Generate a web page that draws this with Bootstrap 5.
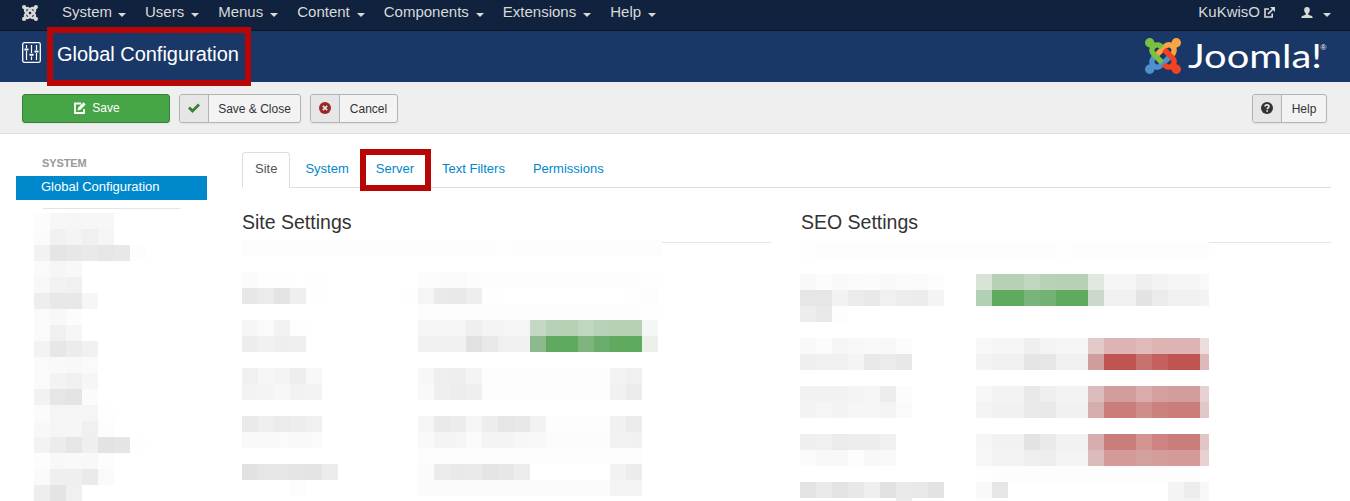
<!DOCTYPE html>
<html lang="en">
<head>
<meta charset="utf-8">
<meta name="viewport" content="width=device-width, initial-scale=1">
<title>Global Configuration</title>
<link rel="stylesheet" href="https://cdn.jsdelivr.net/npm/bootstrap@5.3.0/dist/css/bootstrap.min.css">
<style>
body{font:13px/18px "Liberation Sans",Arial,sans-serif;color:#333;height:501px;overflow:hidden;background:#fff}
.topbar{height:31px;background:#10223e;border-bottom:1px solid #0b1626;padding:0 19px 0 22px}
.topbar .nav-link{color:#d9d9d9;font-size:15px;line-height:24px;padding:0;white-space:nowrap}
.topbar .menu-item{margin-right:19px}
.arrow{display:inline-block;border:4px solid transparent;border-top-color:#d9d9d9;border-bottom:0;margin-left:7px;vertical-align:0}
.titlebar{height:51px;background:#1a3867;color:#fff;padding:0 23px 0 22px}
.page-title{font-size:20px;line-height:47px;margin:0 0 0 16px;font-weight:400;letter-spacing:-.02px;position:relative}
.framed{position:relative}
.framed::after{content:"";position:absolute;border:6px solid #b80606;z-index:5}
.page-title::after{left:-10px;top:-4px;width:204px;height:59px}
.toolbar{height:52px;background:#efefef;border-bottom:1px solid #ddd;padding:12px 23px 0 22px}
.toolbar .btn{height:29px;font-size:12px;line-height:29px;border-radius:3px;padding:0;color:#333;background:#f3f3f3;border:1px solid #b3b3b3;display:flex;overflow:hidden;box-shadow:0 1px 2px rgba(0,0,0,.05)}
.toolbar .btn-save{width:148px;background:#46a546;border-color:#378137;color:#fff;justify-content:center;align-items:center;gap:6px}
.btn-save svg{margin:-2px 0 0 2px}
.btn-icon{width:29px;background:#e6e6e6;border-right:1px solid #b3b3b3;display:flex;align-items:center;justify-content:center;padding-bottom:2px}
.btn-label{flex:1;text-align:center}
.sidebar{width:191px;margin-left:16px;padding-top:21px;flex:none}
.side-head{font-size:11px;font-weight:700;color:#999;margin-left:26px;height:21px;line-height:17px;letter-spacing:-.1px}
.side-active{background:#08c;color:#fff;height:24px;line-height:21px;padding-left:25px;text-decoration:none;display:block}
.side-rule{width:137px;height:1px;background:#e5e5e5;margin:8px 0 4px 27px}
.content{width:1089px;margin-left:35px;padding-top:18px;flex:none}
.nav-tabs{height:36px;border-color:#ddd}
.nav-tabs .nav-link{font-size:13px;line-height:18px;color:#08c;padding:7px 12px;height:36px;border-radius:4px 4px 0 0;margin-right:2px}
.nav-tabs .nav-link.active{color:#555;border-color:#ddd #ddd #fff}
.nav-tabs .tight{margin-right:1px}
.tab-server::after{left:-15.5px;top:-12px;width:71px;height:42px}
.group{width:530px}
.group h2{font-size:19.5px;line-height:36px;height:55px;padding-top:16px;margin:0;border-bottom:1px solid #e5e5e5;font-weight:400;color:#333}
.mosaic{display:grid;grid-auto-rows:16px;background:#fff;position:relative;overflow:hidden}
.mosaic-side{grid-template-columns:repeat(7,16px);margin-left:18px}
.mosaic-site{grid-template-columns:repeat(27,16px);width:420px;margin-top:-3px}
.mosaic-seo{grid-template-columns:repeat(26,16px);width:409px;margin:-1px 0 0 -1px}
</style>
</head>
<body>
<svg width="0" height="0" class="position-absolute">
  <defs>
    <g id="arm"><circle cx="4.700" cy="4.700" r="4.700" fill="currentColor"/><path d="M3 8L8 3L11 6L6 11z" fill="currentColor"/><path d="M17.300 9.500C15 7 11.500 5.800 8.800 8.200C6 10.800 6.300 13.800 8.800 16.300L17 24.500" fill="none" stroke="currentColor" stroke-width="5.400"/></g>
  </defs>
</svg>

<nav class="topbar d-flex align-items-start">
  <svg width="16" height="16" viewBox="0 0 36 36" style="color:#d9d9d9;margin:5px 24px 0 0">
    <use href="#arm" transform="rotate(90 18 18)"/><use href="#arm" transform="rotate(270 18 18)"/><use href="#arm"/><use href="#arm" transform="rotate(180 18 18)"/>
  </svg>
  <a class="nav-link menu-item">System<i class="arrow" style="margin-left:6px"></i></a>
  <a class="nav-link menu-item">Users<i class="arrow"></i></a>
  <a class="nav-link menu-item">Menus<i class="arrow"></i></a>
  <a class="nav-link menu-item">Content<i class="arrow"></i></a>
  <a class="nav-link menu-item">Components<i class="arrow"></i></a>
  <a class="nav-link menu-item">Extensions<i class="arrow"></i></a>
  <a class="nav-link menu-item">Help<i class="arrow"></i></a>
  <a class="nav-link ms-auto d-flex align-items-center">KuKwisO
    <svg width="11" height="11" viewBox="0 0 11 11" fill="none" stroke="#d9d9d9" stroke-width="1.6" style="margin-left:4px"><path d="M5 2H1v8h7.2V6.500M4 7L9.500 1.500"/><path d="M6 0h5v5z" fill="#d9d9d9" stroke="none"/></svg>
  </a>
  <a class="nav-link d-flex" style="margin-left:26px">
    <svg width="12" height="12" viewBox="0 0 12 12" fill="#d9d9d9" style="margin-top:7px"><path d="M6 0C4 0 3.200 1.300 3.200 3c0 1.500.7 2.700 1.500 3.300v1.400L1.200 9Q.3 9.500.3 11h11.400q0-1.500-.9-2L7.300 7.700V6.300C8.100 5.700 8.800 4.500 8.800 3 8.800 1.300 8 0 6 0z"/></svg>
    <i class="arrow" style="margin:13px 0 0 10px"></i>
  </a>
</nav>

<header class="titlebar d-flex align-items-start">
  <svg width="19" height="21" viewBox="0 0 19 21" fill="none" stroke="#fff" style="margin-top:11px"><rect x=".7" y=".7" width="17.600" height="19.600" rx="1.500" stroke-width="1.300"/><path d="M4.500 3v3M4.500 9v9M9.500 3v8M9.500 14.500V18M14.500 3v5M14.500 11v7" stroke-width="1.200"/><path d="M2.500 7.500h4M7.500 12.700h4M12.500 9.500h4" stroke-width="2"/></svg>
  <h1 class="page-title framed">Global Configuration</h1>
  <svg class="ms-auto" width="182" height="44" viewBox="0 0 182 44" style="margin-top:4px">
    <g transform="translate(0 3)">
      <use href="#arm" transform="rotate(90 18 18)" color="#f9a541"/>
      <use href="#arm" transform="rotate(270 18 18)" color="#5091cd"/>
      <use href="#arm" color="#7ac043"/>
      <use href="#arm" transform="rotate(180 18 18)" color="#f44321"/>
    </g>
    <text x="43" y="32.500" fill="#fff" font-family="Lato,sans-serif" font-size="32" textLength="134" lengthAdjust="spacingAndGlyphs">Joomla!</text>
    <text x="175.500" y="15" fill="#fff" font-family="Liberation Sans,sans-serif" font-size="8">®</text>
  </svg>
</header>

<div class="toolbar d-flex">
  <button class="btn btn-save"><svg width="12" height="12" viewBox="0 0 12 12" fill="none" stroke="#fff" stroke-width="1.800"><path d="M7 1.500H1v9.500h9V7"/><path d="M3.500 8.500L4.300 5.500 9.500.3l2.200 2.200L6.500 7.700z" fill="#fff" stroke="none"/></svg>Save</button>
  <button class="btn" style="width:122px;margin-left:9px"><span class="btn-icon"><svg width="12" height="10" viewBox="0 0 12 10" fill="none" stroke="#378137" stroke-width="2.800"><path d="M1 4.500l3.500 3.500L11 1.500"/></svg></span><span class="btn-label">Save &amp; Close</span></button>
  <button class="btn" style="width:88px;margin-left:9px"><span class="btn-icon"><svg width="12" height="12" viewBox="0 0 12 12"><circle cx="6" cy="6" r="6" fill="#942a25"/><path d="M3.800 3.800l4.400 4.400M8.200 3.800L3.800 8.200" stroke="#e6e6e6" stroke-width="1.700"/></svg></span><span class="btn-label">Cancel</span></button>
  <button class="btn ms-auto" style="width:75px"><span class="btn-icon"><svg width="12" height="12" viewBox="0 0 12 12"><circle cx="6" cy="6" r="6" fill="#333"/><path d="M4 4.600C4 2.300 8 2.300 8 4.500 8 5.800 6.200 5.700 6.200 7.200" fill="none" stroke="#e6e6e6" stroke-width="1.600"/><path d="M5.300 8.200h1.700v1.600H5.300z" fill="#e6e6e6"/></svg></span><span class="btn-label">Help</span></button>
</div>

<main class="d-flex align-items-start">
  <aside class="sidebar">
    <div class="side-head">SYSTEM</div>
    <a class="side-active">Global Configuration</a>
    <div class="side-rule"></div>
    <div class="mosaic mosaic-side" data-mosaic="side"></div>
  </aside>
  <section class="content">
    <ul class="nav nav-tabs">
      <li class="nav-item"><a class="nav-link active">Site</a></li>
      <li class="nav-item"><a class="nav-link tight">System</a></li>
      <li class="nav-item"><a class="nav-link"><span class="framed tab-server">Server</span></a></li>
      <li class="nav-item"><a class="nav-link">Text Filters</a></li>
      <li class="nav-item"><a class="nav-link">Permissions</a></li>
    </ul>
    <div class="d-flex justify-content-between">
      <div class="group" style="width:529px"><h2>Site Settings</h2><div class="mosaic mosaic-site" data-mosaic="site"></div></div>
      <div class="group"><h2>SEO Settings</h2><div class="mosaic mosaic-seo" data-mosaic="seo"></div></div>
    </div>
  </section>
</main>

<script src="https://cdn.jsdelivr.net/npm/bootstrap@5.3.0/dist/js/bootstrap.bundle.min.js"></script>
<script>
// Redacted areas as 16px tiles: two digits are a grey, six a colour, "." is empty, "*n" repeats.
const tiles = {
side: [7, `fc f7 f6 f7 f7
fb f1 f4 f0 f5
f2 e5 e7 e9 e6 e8 fd
fa f6 f8
f8 f2 f0
ee e8 e8 f6
fa f8 fc
fa f0 f6
f3 e7 ec f1
fa f9 f8 fa
fa f3 f0 f6
f2 e6 e4 fb
fb f5 f5 f5 fe
f8 f5 f6 f0 fd
f3 ec e6 ef e3 e5 fe
fd f8 f9 f8 fd
fa ef ef ea fa
ee e4 f0`],
site: [27, `fd*16 fe fd*10
.
fb fe fe . fe .*6 fc fb fa fc fd*10 fe
e7 eb e4 ef fe .*5 fe f5 ea e9 ee fe .*8 fe fd
.*11 fd*14 fe
f6 fa f2 fe .*7 f6 f5 f5 ef f4 f5 f5 c5d8c5 b7d1b7*2 bfd6bf b8d2b8 b7d1b7*2 f5f7f4
ed f1 ee ef .*7 f1 f0 f0 e1 e9 f0 f0 8cb98d 60aa60*2 7eb57f 6aac6b 60aa60*2 ebf1ea
.
f0 f6 f4 ee f8 .*6 f7 ef ee f4 fd*8 f3 f0
f3 f4 f7 f2 f3 .*6 f9 ef ed ef fd*8 f1 ec
.
ea ef eb ed f0 .*6 f5 ea ec f5 ed e6 e8 f2 fd*4 f1 eb
f9 f9 fa f9 fa .*6 f9 f4 f5 fa f4 f4 f7 f8 fc*4 f2 f1
.*11 fd*14
e2 e6 e6 e5 e4 ec .*5 fb ec e9 ea e5 e7 ed .*5 f2 ec
.*3 fd .*7 fb*12 f4 f4
.`],
seo: [26, `fe fd*15 fe fd*9
.
f9 fc f9 fa fb f9 fb fa fd .*2 d8e4d8 b7d1b7*2 bfd6bf b8d2b8 b7d1b7*2 e1e8e0 f5 f5 ef f3 f5 f5 f9
e6 e6 f2 eb e9 f0 ed ec f4 .*2 b2d0b4 60aa60*2 79b47b 72b275 60aa60*2 cbd9cb f0 f0 e3 eb f0 f0 f3
ed e9 fd
.
f9 fc f5 f8 f9 f8 fc .*4 f8 f5 f5 ef f4 f5 f5 e3caca deb3b3*2 e0bbba deb4b3 ddb3b3*2 ecdcdb
ef f0 f0 f4 e9 eb e8 .*4 f3 f0 f0 e5 e6 f0 f0 cf9d9c be5552*2 c8726f c4605d be5552*2 ddbab9
.
f2 f2 f2 f4 f6 ed fc .*4 f7 f3 f3 e9 ef f3 f3 dcbcbe d39d9b*2 dbabab d4a09e d39d9b*2 e7d1d1
f3 f5 f3 f6 f6 f4 fa .*4 f4 f1 f1 ea e9 f1 f1 d6adad ca7d7a*2 cf8e8a cb827e ca7d7a*2 e1c7c7
.
ef f0 eb ed ed f0 .*5 f6 f2 f2 e3 ea f2 f2 d6adae ca7e7c*2 d49592 ce8482 ca7e7c*2 e2c5c5
fb f8 f8 fd f8 f9 .*5 f7 f3 f3 ef ee f4 f4 dcbcbb d39a97*2 d4a09e d49c9a d39a97*2 e7d1d1
.*11 fe fd*13
e4 ea e4 e8 ef e2 ea e9 e3 .*2 f9 e6 .*10 f4 ed f8
.*5 fd ec .*4 fd .*11 f4 f4 f8`]
};
document.querySelectorAll('[data-mosaic]').forEach(box => {
  const [cols, text] = tiles[box.dataset.mosaic];
  text.split('\n').forEach(line => {
    const row = line.split(' ').flatMap(t => { const [c, n] = t.split('*'); return Array(+(n || 1)).fill(c); });
    for (let i = 0; i < cols; i++) {
      const cell = document.createElement('i'), c = row[i];
      if (c && c !== '.') cell.style.background = '#' + (c.length === 2 ? c + c + c : c);
      box.append(cell);
    }
  });
});
</script>
</body>
</html>
